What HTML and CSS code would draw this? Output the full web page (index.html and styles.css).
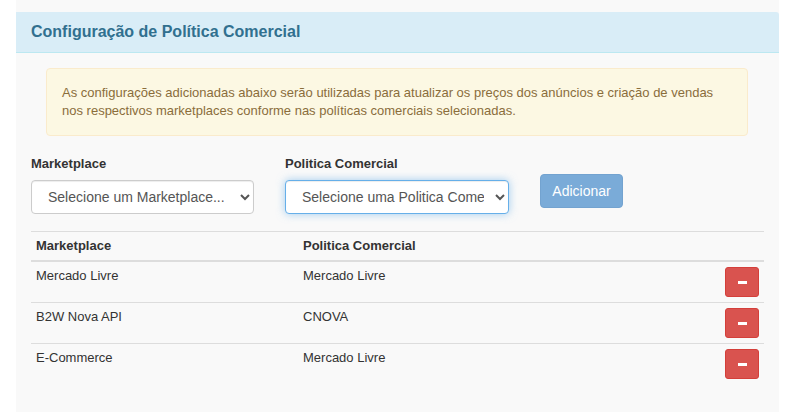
FILE: index.html
```html
<!DOCTYPE html>
<html lang="pt-BR">
<head>
<meta charset="utf-8">
<title>Configuração de Política Comercial</title>
<link rel="stylesheet" href="styles.css">
</head>
<body>
<div class="panel">
  <div class="panel-heading">Configuração de Política Comercial</div>
  <div class="panel-body">
    <div class="alert">As configurações adicionadas abaixo serão utilizadas para atualizar os preços dos anúncios e criação de vendas nos respectivos marketplaces conforme nas políticas comerciais selecionadas.</div>
    <div class="form-row">
      <div class="field field-1">
        <label class="label">Marketplace</label>
        <select class="select"><option>Selecione um Marketplace...</option></select>
      </div>
      <div class="field field-2">
        <label class="label">Politica Comercial</label>
        <select class="select focused"><option>Selecione uma Politica Comercial...</option></select>
      </div>
      <button class="btn-add">Adicionar</button>
    </div>
    <table class="table">
      <thead>
        <tr><th class="col-1">Marketplace</th><th class="col-2">Politica Comercial</th><th></th></tr>
      </thead>
      <tbody>
        <tr><td>Mercado Livre</td><td>Mercado Livre</td><td class="act"><button class="btn-del"><span class="minus"></span></button></td></tr>
        <tr><td>B2W Nova API</td><td>CNOVA</td><td class="act"><button class="btn-del"><span class="minus"></span></button></td></tr>
        <tr><td>E-Commerce</td><td>Mercado Livre</td><td class="act"><button class="btn-del"><span class="minus"></span></button></td></tr>
      </tbody>
    </table>
  </div>
</div>
</body>
</html>
```
FILE: styles.css
```css
* { box-sizing: border-box; }
html, body { margin: 0; padding: 0; background: #ffffff; }
body {
  font-family: "Liberation Sans", Arial, sans-serif;
  font-size: 13px;
  color: #333;
  line-height: 18px;
}
.panel {
  margin-left: 16px;
  width: 763px;
  height: 412px;
  background: #f9f9f9;
  padding-top: 12px;
}
.panel-heading {
  height: 41px;
  background: #d9edf7;
  border-bottom: 1px solid #bce8f1;
  border-top-right-radius: 3px;
  color: #31708f;
  font-weight: bold;
  font-size: 16px;
  line-height: 20px;
  padding: 10px 15px;
}
.panel-body {
  padding: 15px 15px 0 15px;
}
.alert {
  margin: 0 16px 0 15px;
  background: #fcf8e3;
  border: 1px solid #faebcc;
  border-radius: 4px;
  color: #8a6d3b;
  padding: 15px 15px;
  line-height: 18px;
  font-size: 13px;
}
.form-row {
  display: flex;
  align-items: flex-start;
  margin-top: 19px;
}
.field { display: flex; flex-direction: column; }
.field-1 { width: 223px; margin-right: 31px; }
.field-2 { width: 224px; margin-right: 31px; }
.label {
  font-weight: bold;
  font-size: 13px;
  line-height: 18px;
  margin-bottom: 7px;
}
.select {
  height: 34px;
  width: 100%;
  font-family: "Liberation Sans", Arial, sans-serif;
  font-size: 14px;
  color: #555;
  background: #fff;
  border: 1px solid #ccc;
  border-radius: 4px;
  padding: 6px 8px 6px 12px;
  box-shadow: inset 0 1px 1px rgba(0,0,0,.075);
}
.select.focused {
  border-color: #66afe9;
  box-shadow: inset 0 1px 1px rgba(0,0,0,.075), 0 0 8px rgba(102,175,233,.6);
  outline: 0;
}
.btn-add {
  margin-top: 19px;
  width: 83px;
  height: 34px;
  background: #7aabd8;
  border: 1px solid #73a3d0;
  border-radius: 4px;
  color: #fff;
  font-family: "Liberation Sans", Arial, sans-serif;
  font-size: 14px;
  padding: 0;
}
.table {
  margin-top: 17px;
  width: 733px;
  border-collapse: collapse;
}
.table th {
  text-align: left;
  font-weight: bold;
  padding: 5px 5px;
  line-height: 18px;
  border-top: 1px solid #ddd;
  border-bottom: 2px solid #ddd;
}
.col-1 { width: 267px; }
.col-2 { width: 300px; }
.table td {
  padding: 5px 5px;
  vertical-align: top;
  line-height: 18px;
  border-top: 1px solid #ddd;
}
.table tbody tr:first-child td { border-top: 0; }
.table td.act { text-align: right; }
.btn-del {
  width: 34px;
  height: 30px;
  background: #d9534f;
  border: 1px solid #d43f3a;
  border-radius: 3px;
  padding: 0;
  display: inline-flex;
  align-items: center;
  justify-content: center;
  vertical-align: top;
}
.minus {
  display: block;
  width: 9px;
  height: 3px;
  background: #fff;
}
```
